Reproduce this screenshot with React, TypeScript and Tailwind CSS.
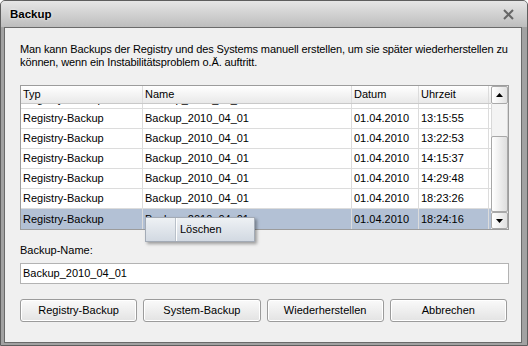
import React from 'react';

const rows = [
  { time: '13:15:55' },
  { time: '13:22:53' },
  { time: '14:15:37' },
  { time: '14:29:48' },
  { time: '18:23:26' },
  { time: '18:24:16', selected: true },
];

const cols = ['w-[122px]', 'w-[209px]', 'w-[67px]', 'w-[70px]'];

const Cell = ({ w, children }: { w: string; children?: React.ReactNode }) => (
  <div className={`${w} h-full shrink-0 border-r border-[#dcdcdc] pl-[2px] flex items-center whitespace-nowrap overflow-hidden`}>
    {children}
  </div>
);

const Row = ({ time, selected }: { time: string; selected?: boolean }) => (
  <div className={`flex h-[20px] border-b border-[#dcdcdc] last:border-b-0 ${selected ? 'bg-[#b3c1d5]' : 'bg-white'}`}>
    <Cell w={cols[0]}>Registry-Backup</Cell>
    <Cell w={cols[1]}>Backup_2010_04_01</Cell>
    <Cell w={cols[2]}>01.04.2010</Cell>
    <Cell w={cols[3]}>{time}</Cell>
    <div className="w-[2px]" />
  </div>
);

const Btn = ({ children }: { children: React.ReactNode }) => (
  <button className="h-[23px] rounded-[3px] border border-[#9b9b9b] bg-gradient-to-b from-[#fafafa] to-[#e3e3e3] text-[11px] text-black shadow-[inset_0_0_0_1px_#ffffff]">
    {children}
  </button>
);

export default function App() {
  return (
    <div
      className="relative w-[528px] h-[346px] flex flex-col border border-[#5e5e5e] rounded-t-[5px] bg-[#a2a2a2] text-[11px] leading-[13px] text-black overflow-hidden"
      style={{ fontFamily: '"Liberation Sans", Arial, sans-serif' }}
    >
      {/* title bar */}
      <div className="h-[26px] shrink-0 flex items-center justify-between pl-[9px] pr-[13px] bg-gradient-to-b from-[#e6e6e6] to-[#bdbdbd]">
        <span className="font-bold text-[11.5px] [text-shadow:0_0_3px_#ffffff]">Backup</span>
        <svg width="11" height="11" viewBox="0 0 11 11">
          <path d="M1 1L10 10M10 1L1 10" stroke="#666" strokeWidth="2" />
        </svg>
      </div>

      {/* client area */}
      <div className="flex-1 ml-[3px] mr-[5px] mb-[2px] border border-[#6a6a6a] bg-[#f0f0f0] pl-[15px] pr-[12px] pt-[15px] flex flex-col">
        <p className="whitespace-nowrap tracking-[-0.12px]">
          Man kann Backups der Registry und des Systems manuell erstellen, um sie später wiederherstellen zu
          <br />
          können, wenn ein Instabilitätsproblem o.Ä. auftritt.
        </p>

        {/* list */}
        <div className="mt-[16px] w-[489px] h-[145px] border border-[#9c9c9c] bg-white flex">
          <div className="w-[470px] flex flex-col">
            <div className="flex h-[18px] border-b border-[#c9c9c9] bg-gradient-to-b from-[#ffffff] to-[#e9e9e9]">
              <Cell w={cols[0]}>Typ</Cell>
              <Cell w={cols[1]}>Name</Cell>
              <Cell w={cols[2]}>Datum</Cell>
              <Cell w={cols[3]}>Uhrzeit</Cell>
            </div>
            {/* row scrolled mostly out of view */}
            <div className="h-[5px] overflow-hidden border-b border-[#dcdcdc]" aria-hidden="true">
              <div className="flex h-[19px] -mt-[14px]">
                <Cell w={cols[0]}>Registry-Backup</Cell>
                <Cell w={cols[1]}>Backup_2010_04_01</Cell>
                <Cell w={cols[2]}>01.04.2010</Cell>
                <Cell w={cols[3]}>13:14:02</Cell>
              </div>
            </div>
            {rows.map((r, i) => (
              <Row key={i} time={r.time} selected={r.selected} />
            ))}
          </div>

          {/* scrollbar */}
          <div className="w-[17px] flex flex-col bg-[#f3f3f3]">
            <div className="h-[18px] border border-[#a8a8a8] rounded-[2px] bg-gradient-to-r from-[#ffffff] to-[#e2e2e2] flex items-center justify-center">
              <svg width="7" height="4" viewBox="0 0 7 4"><path d="M3.5 0L7 4H0Z" fill="#000" /></svg>
            </div>
            <div className="flex-1 flex flex-col border-x border-[#d8d8d8]">
              <div className="mt-auto h-[76px] -mx-px border border-[#a8a8a8] rounded-[2px] bg-gradient-to-r from-[#ffffff] to-[#dedede]" />
            </div>
            <div className="h-[17px] border border-[#a8a8a8] rounded-[2px] bg-gradient-to-r from-[#ffffff] to-[#e2e2e2] flex items-center justify-center">
              <svg width="7" height="4" viewBox="0 0 7 4"><path d="M0 0H7L3.5 4Z" fill="#000" /></svg>
            </div>
          </div>
        </div>

        <label className="mt-[14px] h-[13px]">Backup-Name:</label>
        <div className="mt-[6px] w-[489px] h-[21px] border border-[#b3b3b3] bg-white flex items-center pl-[2px]">
          Backup_2010_04_01
        </div>

        <div className="mt-[15px] w-[487px] grid grid-cols-4 gap-[6px]">
          <Btn>Registry-Backup</Btn>
          <Btn>System-Backup</Btn>
          <Btn>Wiederherstellen</Btn>
          <Btn>Abbrechen</Btn>
        </div>
      </div>

      {/* context menu */}
      <div className="absolute left-[144px] top-[216px] w-[110px] h-[25px] border border-[#a3abb6] bg-gradient-to-b from-[#eef1f4] to-[#d2d9e2] shadow-[2px_2px_3px_rgba(0,0,0,0.35)] flex">
        <div className="w-[30px] h-full border-r border-[#b9c0c9]" />
        <div className="flex-1 border-l border-white flex items-center pl-[3px]">Löschen</div>
      </div>
    </div>
  );
}
